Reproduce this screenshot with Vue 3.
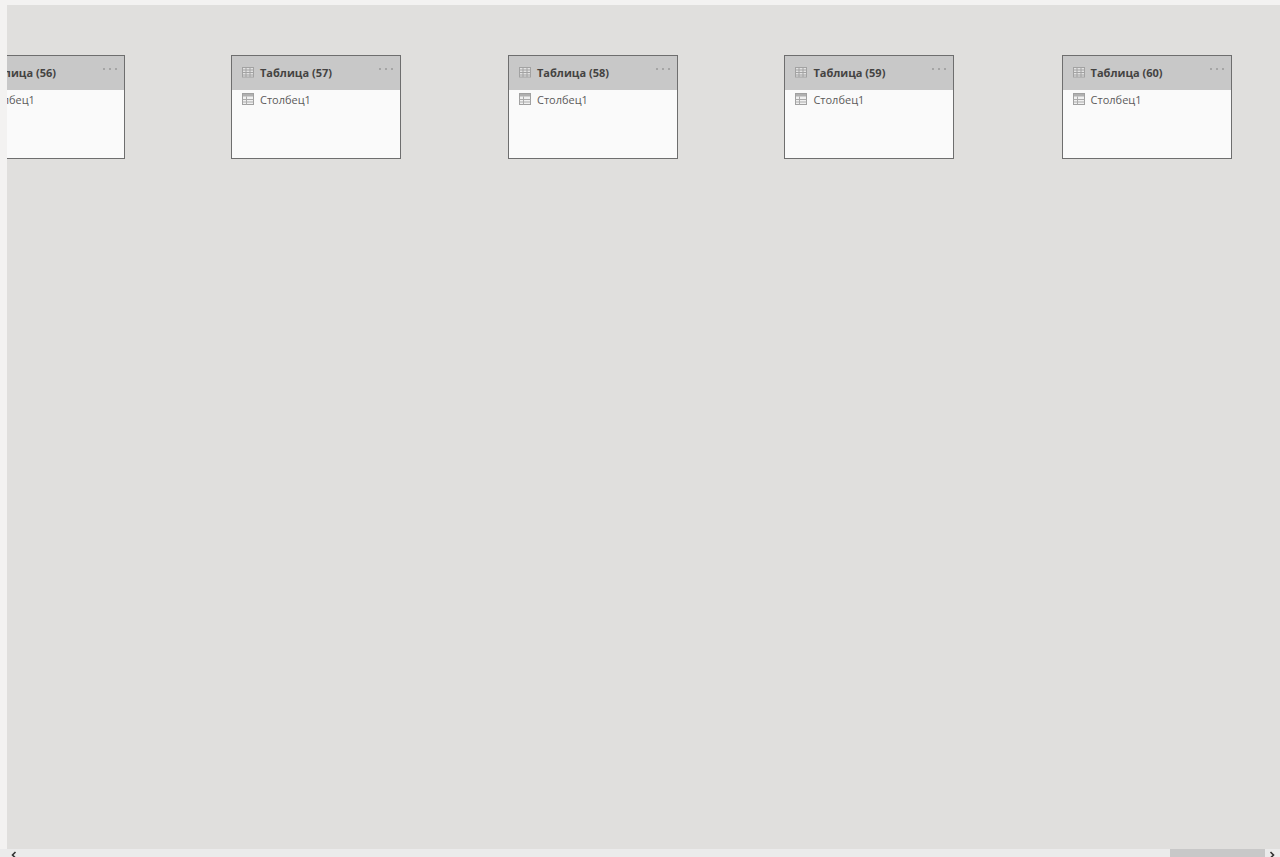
<template>
  <div class="page">
    <div class="top-strip"></div>
    <div class="main">
      <div class="side-strip"></div>
      <div class="canvas">
        <div
          v-for="t in tables"
          :key="t.id"
          class="node"
          :style="{ left: t.left + 'px' }"
        >
          <div class="node__head">
            <svg class="ico" viewBox="0 0 12 12" aria-hidden="true">
              <rect x="0.5" y="1.5" width="11" height="9.5" fill="#e2e2e2" stroke="#a2a2a2" />
              <path d="M0.5 4H11.5M0.5 6.5H11.5M0.5 9H11.5M4 1.5V11M8 1.5V11" fill="none" stroke="#a2a2a2" />
            </svg>
            <span class="node__title">Таблица ({{ t.id }})</span>
            <span class="node__more"><i></i><i></i><i></i></span>
          </div>
          <div class="node__row">
            <svg class="ico" viewBox="0 0 12 12" aria-hidden="true">
              <rect x="0.5" y="0.5" width="11" height="11" fill="#f0f0f0" stroke="#a0a0a0" />
              <rect x="1" y="1" width="10" height="2.5" fill="#b0b0b0" />
              <path d="M0.5 6.5H11.5M0.5 9H11.5M4.5 3.5V11.5" fill="none" stroke="#ababab" />
            </svg>
            <span class="node__col">Столбец1</span>
          </div>
        </div>
      </div>
    </div>
    <div class="hscroll">
      <svg class="arrow" viewBox="0 0 6 8" aria-hidden="true"><path d="M4.5 1L1.5 4L4.5 7" fill="none" stroke="#333" stroke-width="1.6" /></svg>
      <div class="track"><div class="thumb"></div></div>
      <svg class="arrow" viewBox="0 0 6 8" aria-hidden="true"><path d="M1.5 1L4.5 4L1.5 7" fill="none" stroke="#333" stroke-width="1.6" /></svg>
    </div>
  </div>
</template>

<script setup>
// card positions on the model canvas
const tables = [
  { id: 56, left: -52 },
  { id: 57, left: 224 },
  { id: 58, left: 501 },
  { id: 59, left: 777.4 },
  { id: 60, left: 1054.6 },
]
</script>

<style>
html, body { margin: 0; height: 100%; overflow: hidden; background: #f3f2f1; }
</style>

<style scoped>
.page {
  width: 1280px;
  height: 857px;
  display: flex;
  flex-direction: column;
  font-family: "Open Sans", "Noto Sans", sans-serif;
}
.top-strip { height: 5px; background: #f3f2f1; }
.main { flex: 1; display: flex; min-height: 0; }
.side-strip { width: 7px; background: #f3f2f1; }
.canvas {
  flex: 1;
  position: relative;
  overflow: hidden;
  background: #e0dfdd;
}
.node {
  position: absolute;
  top: 50px;
  width: 170px;
  height: 104px;
  box-sizing: border-box;
  border: 1px solid #6e6e6e;
  background: #fafafa;
}
.node__head {
  height: 34px;
  display: flex;
  align-items: center;
  padding: 0 7px 2px 10px;
  box-sizing: border-box;
  background: #c8c8c8;
}
.ico { width: 12px; height: 12px; flex: none; }
.node__title {
  margin-left: 6px;
  font-size: 11px;
  font-weight: 700;
  color: #444342;
  white-space: nowrap;
}
.node__more {
  margin-left: auto;
  align-self: flex-start;
  margin-top: 12px;
  display: flex;
  gap: 4px;
}
.node__more i { width: 2px; height: 2px; border-radius: 50%; background: #9a9a9a; }
.node__row {
  display: flex;
  align-items: center;
  height: 18px;
  padding-left: 10px;
}
.node__col {
  margin-left: 6px;
  font-size: 11px;
  color: #5c5b5a;
  white-space: nowrap;
}
.hscroll {
  height: 8px;
  display: flex;
  align-items: flex-start;
  padding-left: 11px;
  background: #ebebeb;
  overflow: hidden;
}
.arrow { width: 6px; height: 8px; flex: none; margin-top: 2px; }
.track { flex: 1; height: 8px; position: relative; }
.thumb {
  position: absolute;
  left: 1153px;
  width: 95px;
  top: 0;
  bottom: 0;
  background: #c8c8c8;
}
.hscroll .arrow:last-child { margin-right: 5px; }
</style>
